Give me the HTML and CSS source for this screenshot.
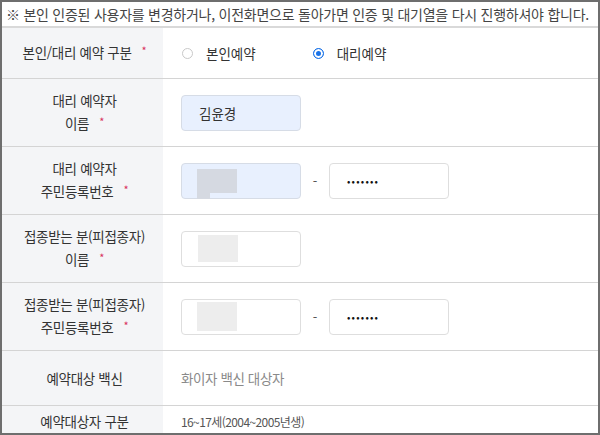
FILE: index.html
```html
<!DOCTYPE html>
<html lang="ko">
<head>
<meta charset="UTF-8">
<meta name="viewport" content="width=device-width, initial-scale=1.0">
<link rel="stylesheet" href="styles.css">
</head>
<body>

<div class="frame">
  <p class="notice">※ 본인 인증된 사용자를 변경하거나, 이전화면으로 돌아가면 인증 및 대기열을 다시 진행하셔야 합니다.</p>

  <div class="form-table">
    <!-- 예약 구분 -->
    <div class="row row-short">
      <div class="label"><span>본인/대리 예약 구분<span class="req">*</span></span></div>
      <div class="value">
        <label class="radio"><span class="dot"></span>본인예약</label>
        <label class="radio on"><span class="dot"></span>대리예약</label>
      </div>
    </div>

    <!-- 대리 예약자 -->
    <div class="row">
      <div class="label"><span>대리 예약자<br>이름<span class="req">*</span></span></div>
      <div class="value">
        <div class="box filled"><span class="name">김윤경</span></div>
      </div>
    </div>

    <div class="row">
      <div class="label"><span>대리 예약자<br>주민등록번호<span class="req">*</span></span></div>
      <div class="value">
        <div class="box filled"><span class="mask mask-blue"></span></div>
        <span class="dash">-</span>
        <div class="box"><span class="pw">•••••••</span></div>
      </div>
    </div>

    <!-- 피접종자 -->
    <div class="row">
      <div class="label"><span>접종받는 분(피접종자)<br>이름<span class="req">*</span></span></div>
      <div class="value">
        <div class="box"><span class="mask mask-tall"></span></div>
      </div>
    </div>

    <div class="row">
      <div class="label"><span>접종받는 분(피접종자)<br>주민등록번호<span class="req">*</span></span></div>
      <div class="value">
        <div class="box"><span class="mask mask-full"></span></div>
        <span class="dash">-</span>
        <div class="box"><span class="pw">•••••••</span></div>
      </div>
    </div>

    <div class="row row-info">
      <div class="label"><span>예약대상 백신</span></div>
      <div class="value"><span class="info">화이자 백신 대상자</span></div>
    </div>

    <div class="row row-last">
      <div class="label"><span>예약대상자 구분</span></div>
      <div class="value"><span class="info small">16~17세(2004~2005년생)</span></div>
    </div>
  </div>
</div>

</body>
</html>
```

FILE: styles.css
```css
html, body {
  margin: 0;
  padding: 0;
  background: #fff;
}
body {
  font-family: "Noto Sans CJK KR", "Noto Sans", sans-serif;
  color: #333;
}
.frame {
  width: 596px;
  height: 431px;
  border: 2px solid #6e6e6e;
  overflow: hidden;
}
.notice {
  margin: 0;
  height: 24px;
  line-height: 24px;
  padding-left: 4px;
  font-size: 14px;
  color: #444;
  letter-spacing: -0.25px;
  white-space: nowrap;
  border-bottom: 2px solid #d9d9d9;
}
.row {
  display: flex;
  height: 67px;
  border-bottom: 1px solid #d4d4d4;
}
.row-short {
  height: 50px;
}
.row-info {
  height: 54px;
}
.row-last {
  height: 30px;
  border-bottom: none;
}
.label {
  width: 161px;
  flex: none;
  background: #f4f5f7;
  display: flex;
  align-items: center;
  justify-content: center;
  text-align: center;
  font-size: 13.5px;
  line-height: 23px;
  color: #333;
  letter-spacing: -0.3px;
  padding-left: 4px;
  box-sizing: border-box;
}
.req {
  color: #d8315b;
  font-size: 11px;
  margin-left: 10px;
  position: relative;
  top: -3px;
}
.value {
  flex: 1;
  display: flex;
  align-items: center;
  padding-left: 18px;
}
.radio {
  display: flex;
  align-items: center;
  font-size: 13.5px;
  color: #333;
  margin-right: 56px;
}
.dot {
  width: 9px;
  height: 9px;
  border: 1px solid #c9c9c9;
  border-radius: 50%;
  margin-right: 13px;
  margin-left: 1px;
}
.radio.on .dot {
  border-color: #1a73e8;
  background: #1a73e8;
  box-shadow: inset 0 0 0 2px #fff;
}
.box {
  width: 118px;
  height: 34px;
  border: 1px solid #dedede;
  border-radius: 4px;
  display: flex;
  align-items: center;
  position: relative;
}
.box.filled {
  background: #e8f0fe;
  border-color: #d6dce6;
}
.name {
  font-size: 13.5px;
  margin-left: 17px;
  color: #333;
}
.mask {
  display: block;
  width: 40px;
  margin-left: 15px;
  background: #ededed;
}
.mask-blue {
  height: 24px;
  background: #d5d9e1;
  align-self: flex-start;
  margin-top: 5px;
}
.mask-blue::after {
  content: "";
  position: absolute;
  left: 15px;
  top: 29px;
  width: 13px;
  height: 6px;
  background: #d5d9e1;
}
.mask-tall {
  height: 27px;
  margin-left: 16px;
}
.mask-full {
  height: 29px;
}
.dash {
  width: 28px;
  text-align: center;
  font-size: 13px;
  color: #555;
}
.pw {
  margin-left: 17px;
  font-size: 10px;
  letter-spacing: 1.2px;
  color: #111;
}
.info {
  font-size: 13.5px;
  color: #8a8a8a;
  letter-spacing: -0.4px;
}
.info.small {
  font-size: 12px;
  color: #555;
  letter-spacing: -0.6px;
}
```
